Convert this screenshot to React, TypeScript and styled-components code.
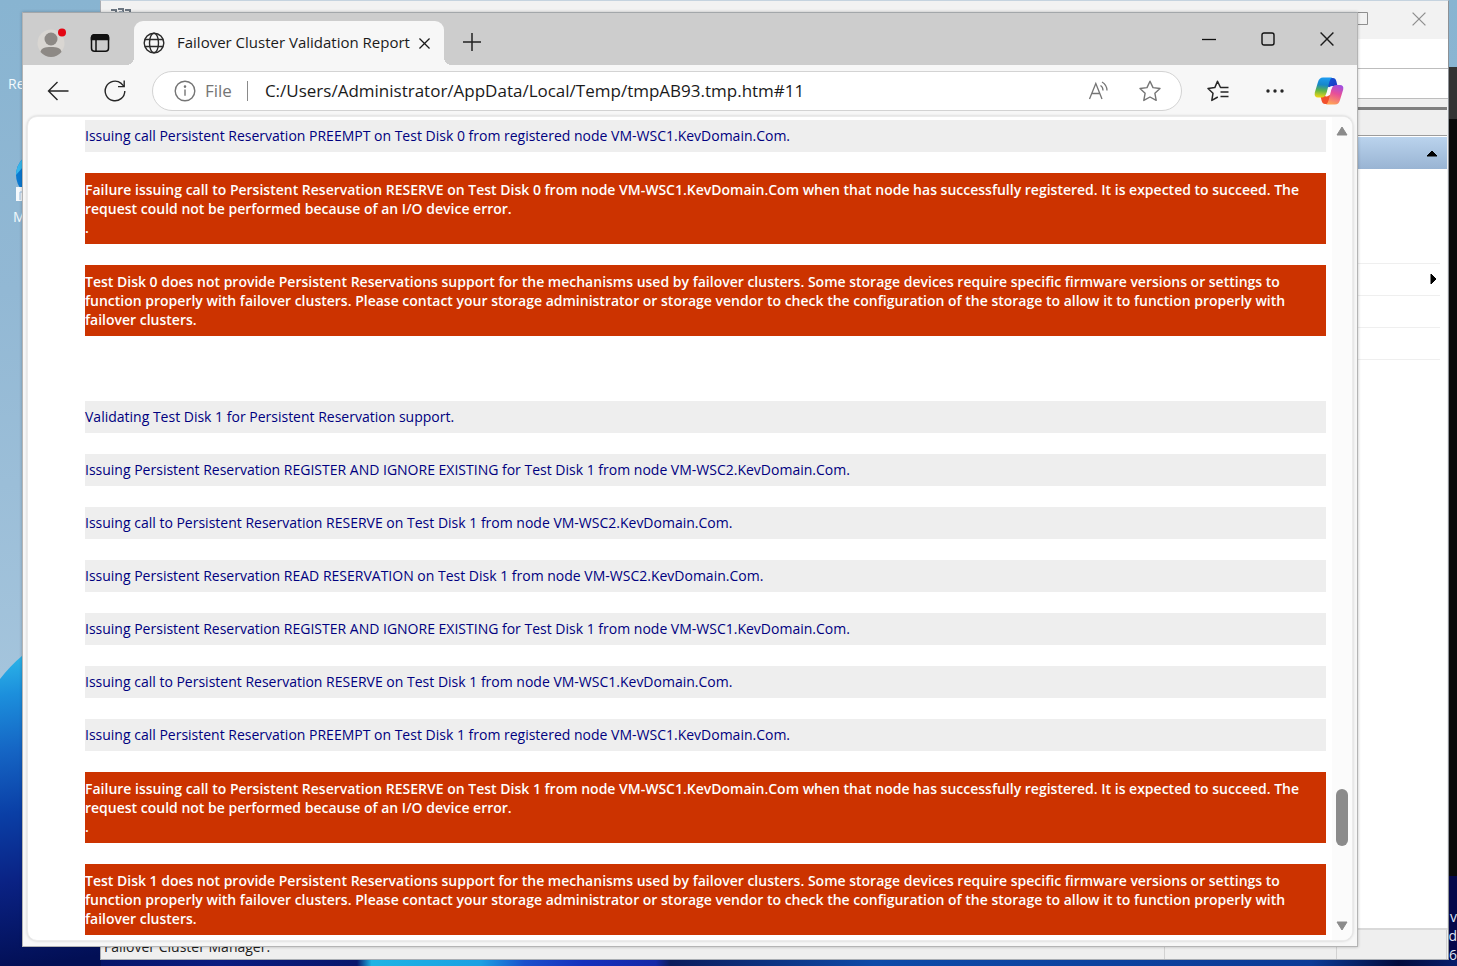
import React from "react";
import styled, { createGlobalStyle } from "styled-components";

const Global = createGlobalStyle`
  * { box-sizing: border-box; }
  html, body, #root { height: 100%; }
  body { margin: 0; font-family: "Open Sans", "Noto Sans", sans-serif; }
  button { border: 0; padding: 0; background: none; font: inherit; color: inherit; display: flex; align-items: center; justify-content: center; }
  svg { display: block; flex: none; }
`;

/* ---------- Desktop ---------- */

const Desktop = styled.main`
  position: relative;
  min-height: 100vh;
  overflow: hidden;
  background: #8ab4d0;
`;

const WallpaperSvg = styled.svg`
  position: absolute;
  inset: 0;
  width: 100%;
  height: 100%;
`;

const Shortcut = styled.div<{ $top: number; $left: number }>`
  position: absolute;
  top: ${(p) => p.$top}px;
  left: ${(p) => p.$left}px;
  color: #f4fafd;
  font-size: 14px;
  line-height: 20px;
`;

const ConsoleEdge = styled.div`
  position: absolute;
  top: 67px;
  right: 0;
  bottom: 90px;
  width: 10px;
  background: linear-gradient(#333 52px, #0a0a0a 52px);
`;

const Watermark = styled.div`
  position: absolute;
  right: 0;
  bottom: 2px;
  color: #dfe6f5;
  font-size: 14px;
  line-height: 19px;
  text-align: right;
`;

/* ---------- Cluster manager window ---------- */

const ManagerWindow = styled.section`
  position: absolute;
  inset: 0 8px 6px 100px;
  display: flex;
  flex-direction: column;
  background: #fff;
  border: 1px solid #a9adb3;
  border-top-color: #c5d3df;
  border-right: 1px solid #8d9196;
`;

const ManagerTitle = styled.header`
  display: flex;
  flex: none;
  justify-content: space-between;
  height: 38px;
  padding: 6px 22px 0 10px;
  background: #f2f2f2;
`;

const ManagerControls = styled.div`
  display: flex;
  gap: 44px;
  height: 24px;
  color: #8f8f8f;
`;

const ManagerBar = styled.div`
  flex: none;
  height: 30px;
  border-bottom: 1px solid #bdbdbd;
`;

const ManagerBody = styled.div`
  flex: 1;
  padding: 8px 1px 0 0;
  background: #efefef;
`;

const ActionsPane = styled.aside`
  height: 100%;
  border-top: 3px solid #7f7f7f;
  background: #fff;
`;

const ActionsHead = styled.div`
  height: 26px;
  border-bottom: 1px solid #9c9c9c;
  background: #efefef;
`;

const ActionsGroup = styled.div`
  display: flex;
  align-items: center;
  justify-content: flex-end;
  height: 32px;
  margin: 1px 0 94px;
  padding-right: 9px;
  background: linear-gradient(#bad3ed, #99b4d3);
`;

const ActionItem = styled.div`
  display: flex;
  align-items: center;
  justify-content: flex-end;
  height: 32px;
  margin-right: 7px;
  padding: 0 3px 2px 0;
  border-top: 1px solid #efefef;
`;

const StatusBar = styled.footer`
  display: flex;
  flex: none;
  justify-content: flex-end;
  height: 31px;
  border-top: 2px solid #d9d9d9;
  background: #efefef;
`;

const StatusText = styled.span`
  flex: 1;
  padding: 7px 0 0 3px;
  font-size: 14px;
  line-height: 20px;
  color: #1c1c1c;
`;

const StatusCell = styled.span<{ $width: number }>`
  width: ${(p) => p.$width}px;
  border-left: 1px solid #d2d2d2;
`;

/* ---------- Browser window ---------- */

const BrowserWindow = styled.section`
  position: absolute;
  inset: 12px 99px 19px 22px;
  display: flex;
  flex-direction: column;
  background: #f7f7f7;
  border: 1px solid #b4b4b4;
  border-top-color: #a3a7aa;
  box-shadow: 0 0 3px rgba(0, 0, 0, 0.25);
`;

const TitleBar = styled.header`
  display: flex;
  flex: none;
  align-items: flex-end;
  height: 52px;
  background: #cdcdcd;
  color: #1b1b1b;
`;

const ProfileButton = styled.button`
  width: 30px;
  height: 30px;
  margin: 0 0 7px 13px;
`;

const WorkspaceButton = styled.button`
  width: 20px;
  height: 20px;
  margin: 0 24px 12px 24px;
`;

const Tab = styled.div`
  position: relative;
  display: flex;
  align-items: center;
  width: 310px;
  height: 44px;
  padding: 0 14px 0 9px;
  border-radius: 9px 9px 0 0;
  background: #f7f7f7;

  &::before,
  &::after {
    content: "";
    position: absolute;
    bottom: 0;
    width: 8px;
    height: 8px;
  }
  &::before {
    left: -8px;
    background: radial-gradient(circle at 0 0, #cdcdcd 8px, #f7f7f7 8px);
  }
  &::after {
    right: -8px;
    background: radial-gradient(circle at 100% 0, #cdcdcd 8px, #f7f7f7 8px);
  }
`;

const TabTitle = styled.span`
  flex: 1;
  min-width: 0;
  padding: 0 0 2px 12px;
  font-size: 15px;
  line-height: 20px;
  white-space: nowrap;
`;

const NewTab = styled.button`
  width: 20px;
  height: 20px;
  margin: 0 auto 13px 18px;
`;

const WindowControls = styled.div`
  display: flex;
  align-items: center;
  gap: 43px;
  height: 52px;
  padding-right: 22px;

  button { width: 16px; height: 52px; }
`;

const Toolbar = styled.div`
  display: flex;
  flex: none;
  align-items: center;
  height: 51px;
  padding: 0 16px 0 23px;
  color: #262626;
`;

const IconButton = styled.button<{ $gap?: number }>`
  flex: none;
  width: 24px;
  height: 32px;
  margin-left: ${(p) => p.$gap ?? 0}px;
`;

const AddressBar = styled.div`
  display: flex;
  flex: 1;
  align-items: center;
  min-width: 0;
  height: 40px;
  margin-left: 25px;
  padding: 0 19px 0 21px;
  border: 1px solid #d3d3d3;
  border-radius: 20px;
  background: #fff;
  color: #757575;
`;

const SchemeLabel = styled.label`
  padding: 0 15px 0 9px;
  border-right: 1px solid #8a8a8a;
  font-size: 17px;
  line-height: 20px;
`;

const AddressInput = styled.input`
  flex: 1;
  min-width: 0;
  padding: 0 0 0 17px;
  border: 0;
  outline: 0;
  background: none;
  color: #1a1a1a;
  font: 17px/24px "Open Sans", "Noto Sans", sans-serif;
`;

const Viewport = styled.div`
  display: flex;
  flex: 1;
  min-height: 0;
  margin: 0 4px 5px;
  overflow: hidden;
  border: 1px solid #ebebeb;
  border-radius: 10px;
  background: #fff;
  box-shadow: 0 0 3px rgba(0, 0, 0, 0.18);
`;

const Report = styled.article`
  flex: 1;
  min-width: 0;
  padding: 3px 6px 0 57px;
  overflow: hidden;
`;

const ReportSection = styled.section`
  display: flex;
  flex-direction: column;
  gap: 21px;
  margin-bottom: 65px;
`;

const InfoRow = styled.p`
  flex: none;
  margin: 0;
  padding: 7px 0;
  background: #eee;
  color: #00007f;
  font-size: 14px;
  line-height: 18px;
`;

const ErrorRow = styled.p`
  flex: none;
  margin: 0;
  padding: 7px 0;
  background: #cc3300;
  color: #fff;
  font-size: 14px;
  font-weight: 600;
  line-height: 19px;
  white-space: pre-line;
`;

const ScrollTrack = styled.div`
  position: relative;
  display: flex;
  flex: none;
  flex-direction: column;
  align-items: center;
  justify-content: space-between;
  width: 20px;
  padding: 9px 0;
  background: #fbfbfb;
`;

const ScrollThumb = styled.span`
  position: absolute;
  bottom: 94px;
  left: 4px;
  width: 12px;
  height: 57px;
  border-radius: 6px;
  background: #8b8b8b;
`;

/* ---------- Drawings ---------- */

const Wallpaper = () => (
  <WallpaperSvg viewBox="0 0 1457 966" preserveAspectRatio="none" aria-hidden="true">
    <defs>
      <linearGradient id="sky" x1="0" y1="0" x2="0" y2="1">
        <stop offset="0" stopColor="#88b4d1" />
        <stop offset="0.3" stopColor="#92b8d4" />
        <stop offset="0.7" stopColor="#a4c4dc" />
      </linearGradient>
      <linearGradient id="bloom" gradientUnits="userSpaceOnUse" x1="22" y1="655" x2="70" y2="960">
        <stop offset="0" stopColor="#2cb4e8" />
        <stop offset="0.12" stopColor="#1c8fdc" />
        <stop offset="0.3" stopColor="#1565c4" />
        <stop offset="0.5" stopColor="#0a3fa6" />
        <stop offset="0.72" stopColor="#0a2284" />
        <stop offset="1" stopColor="#020f55" />
      </linearGradient>
      <linearGradient id="base" gradientUnits="userSpaceOnUse" x1="0" y1="0" x2="1457" y2="0">
        <stop offset="0" stopColor="#020f55" />
        <stop offset="0.15" stopColor="#0a1b80" />
        <stop offset="0.245" stopColor="#08166c" />
        <stop offset="0.255" stopColor="#1db4e4" />
        <stop offset="0.33" stopColor="#1ba0e2" />
        <stop offset="0.36" stopColor="#1a50cc" />
        <stop offset="0.4" stopColor="#1530bd" />
        <stop offset="0.45" stopColor="#1428a8" />
        <stop offset="0.46" stopColor="#0b1c5c" />
        <stop offset="0.6" stopColor="#0d4aa8" />
        <stop offset="0.9" stopColor="#0b3a96" />
        <stop offset="0.96" stopColor="#020a3c" />
        <stop offset="1" stopColor="#071d6c" />
      </linearGradient>
    </defs>
    <rect width="1457" height="966" fill="url(#sky)" />
    <path d="M0 679Q10 666 23 655L110 620V966H0Z" fill="url(#bloom)" />
    <path d="M101 946H1457V966H101Z" fill="url(#base)" />
    <path d="M1440 860H1457V960H1440Z" fill="#04084a" />
  </WallpaperSvg>
);

const EdgeShortcutIcon = () => (
  <svg width="48" height="48" viewBox="0 0 48 48" aria-hidden="true">
    <circle cx="24" cy="22" r="23" fill="#0b79d0" />
    <path d="M1 22A23 23 0 0 1 24-1L8 14Z" fill="#35b6ec" />
    <rect x="1" y="34" width="16" height="16" fill="#f5f9fc" />
    <path d="M5 47V39H10" fill="none" stroke="#9dbfe0" />
  </svg>
);

const ServersIcon = () => (
  <svg width="20" height="8" viewBox="0 0 20 8" fill="none" stroke="#6c7681" strokeWidth="2" aria-hidden="true">
    <path d="M0 3H5V8M7 2H12V8M14 3H19V8" />
    <path d="M0 6H4M8 5H12M14 6H18" stroke="#9aa7b4" />
  </svg>
);

const Avatar = () => (
  <svg width="30" height="30" viewBox="0 0 30 30" aria-hidden="true">
    <circle cx="15" cy="15" r="13.5" fill="#d9d6d2" />
    <circle cx="15" cy="11" r="6.500" fill="#8d8985" />
    <path d="M4.500 24C5 20 9 19 15 19S25 20 25.500 24Q21 29 15 29T4.500 24Z" fill="#8d8985" />
    <circle cx="26" cy="4.500" r="4" fill="#e30613" />
  </svg>
);

const WorkspaceIcon = () => (
  <svg width="20" height="20" viewBox="0 0 20 20" fill="none" stroke="#111" strokeWidth="1.500" aria-hidden="true">
    <rect x="1.500" y="1.800" width="17" height="16.500" rx="3" />
    <path d="M1.500 6.500V4.500Q1.500 1.800 4.500 1.800H15.500Q18.500 1.800 18.500 4.500V6.500Z" fill="#111" />
    <path d="M6 7V18" />
  </svg>
);

const GlobeIcon = () => (
  <svg width="22" height="22" viewBox="0 0 22 22" fill="none" stroke="#2a2a2a" strokeWidth="1.400" aria-hidden="true">
    <circle cx="11" cy="11" r="9.800" />
    <ellipse cx="11" cy="11" rx="4.500" ry="9.800" />
    <path d="M2 7.500H20M2 14.500H20" />
  </svg>
);

const Cross = ({ size = 12, width = 1.4 }: { size?: number; width?: number }) => (
  <svg width={size} height={size} viewBox="0 0 12 12" fill="none" stroke="currentColor" strokeWidth={width} aria-hidden="true">
    <path d="M.5.5L11.500 11.500M11.500.5L.5 11.500" />
  </svg>
);

const PlusIcon = () => (
  <svg width="20" height="20" viewBox="0 0 20 20" fill="none" stroke="#222" strokeWidth="1.500" aria-hidden="true">
    <path d="M10 1V19M1 10H19" />
  </svg>
);

const MinimizeIcon = () => (
  <svg width="14" height="14" viewBox="0 0 14 14" stroke="#111" strokeWidth="1.300" aria-hidden="true">
    <path d="M0 7.500H14" />
  </svg>
);

const MaximizeIcon = () => (
  <svg width="14" height="14" viewBox="0 0 14 14" fill="none" stroke="#111" strokeWidth="1.400" aria-hidden="true">
    <rect x="1" y="1" width="12" height="12" rx="2" />
  </svg>
);

const BackIcon = () => (
  <svg width="22" height="20" viewBox="0 0 22 20" fill="none" stroke="currentColor" strokeWidth="1.400" aria-hidden="true">
    <path d="M21.500 10H1.500M10.500 1L1.500 10L10.500 19" />
  </svg>
);

const ReloadIcon = () => (
  <svg width="24" height="24" viewBox="0 0 24 24" fill="none" stroke="currentColor" strokeWidth="1.400" aria-hidden="true">
    <path d="M21.800 12A9.800 9.800 0 1 1 18.200 4.400L21 7.200" />
    <path d="M21.200 1.500V7.600H15" />
  </svg>
);

const InfoIcon = () => (
  <svg width="22" height="22" viewBox="0 0 22 22" fill="none" stroke="currentColor" strokeWidth="1.400" aria-hidden="true">
    <circle cx="11" cy="11" r="9.800" />
    <path d="M11 9.500V15.800" />
    <circle cx="11" cy="6.600" r=".6" fill="currentColor" />
  </svg>
);

const ReadAloudIcon = () => (
  <svg width="22" height="20" viewBox="0 0 22 20" fill="none" stroke="currentColor" strokeWidth="1.300" aria-hidden="true">
    <path d="M1.500 18L7.800 2.500L14 18M3.800 12.500H11.800" />
    <path d="M12.500 4.500Q15 6 15 9.500M14 1Q19 4 19 9.500" />
  </svg>
);

const StarIcon = () => (
  <svg width="22" height="22" viewBox="0 0 22 22" fill="none" stroke="currentColor" strokeWidth="1.400" strokeLinejoin="round" aria-hidden="true">
    <path d="M11 1.200L14 7.600L21 8.500L15.900 13.300L17.200 20.400L11 17L4.800 20.400L6.100 13.300L1 8.500L8 7.600Z" />
  </svg>
);

const FavoritesIcon = () => (
  <svg width="22" height="22" viewBox="0 0 22 22" fill="none" stroke="currentColor" strokeWidth="1.500" strokeLinejoin="round" aria-hidden="true">
    <path d="M21.500 7.500H13.500L10.500 1.200L7.800 7.600L1 8.500L6 13.300L4.800 20.400L10.800 17" />
    <path d="M13.500 12H21.500M13.500 16.500H21.500" />
  </svg>
);

const DotsIcon = () => (
  <svg width="18" height="4" viewBox="0 0 18 4" fill="currentColor" aria-hidden="true">
    <circle cx="2" cy="2" r="1.700" />
    <circle cx="9" cy="2" r="1.700" />
    <circle cx="16" cy="2" r="1.700" />
  </svg>
);

const CopilotIcon = () => (
  <svg width="30" height="28" viewBox="0 0 30 28" aria-hidden="true">
    <defs>
      <linearGradient id="cpA" x1="0.4" y1="0" x2="0.3" y2="1">
        <stop offset="0" stopColor="#1d9bf0" />
        <stop offset="0.35" stopColor="#1787c9" />
        <stop offset="0.65" stopColor="#5fb548" />
        <stop offset="1" stopColor="#f5d713" />
      </linearGradient>
      <linearGradient id="cpB" x1="0.7" y1="0" x2="0.4" y2="1">
        <stop offset="0" stopColor="#a14fe0" />
        <stop offset="0.45" stopColor="#e84f98" />
        <stop offset="1" stopColor="#ffa257" />
      </linearGradient>
      <linearGradient id="cpC" x1="0" y1="0" x2="1" y2="1">
        <stop offset="0" stopColor="#1358d8" />
        <stop offset="1" stopColor="#1c34c0" />
      </linearGradient>
    </defs>
    <path d="M14 1H19Q21.500 1 22.300 4L23.500 9H20Q17 9 16 11L13 9Z" fill="url(#cpC)" />
    <path d="M16 27H11Q8.500 27 7.700 24L6.500 19H10Q13 19 14 17L18 20Z" fill="#f2502c" />
    <path d="M9 .5H18Q16.200 1.500 15.300 5L12.800 15Q11.500 20.500 7.500 20.500H4Q0 20.500 .8 15.500L4 5Q5.200.5 9 .5Z" fill="url(#cpA)" />
    <path d="M21 27.500H12Q13.800 26.500 14.700 23L17.200 13Q18.500 8 22.500 8H26Q30 8 29.200 12.500L26 23Q24.800 27.500 21 27.500Z" fill="url(#cpB)" />
    <path d="M14.800 10.500Q16 8.800 19 8.900Q17.600 10 17 12.500L15.300 18Q14.300 19.800 11.200 19.300Q12.800 17.500 13.300 15Z" fill="#fdf8fb" />
  </svg>
);

const Triangle = ({ d, w, h, fill }: { d: string; w: number; h: number; fill: string }) => (
  <svg width={w} height={h} viewBox={`0 0 ${w} ${h}`} aria-hidden="true">
    <path d={d} fill={fill} stroke={fill} strokeLinejoin="round" />
  </svg>
);

/* ---------- Report data ---------- */

type Entry = { kind: "info" | "error"; text: string };

const info = (text: string): Entry => ({ kind: "info", text });
const error = (text: string): Entry => ({ kind: "error", text });

const outcome = (disk: number): Entry[] => [
  info(`Issuing call Persistent Reservation PREEMPT on Test Disk ${disk} from registered node VM-WSC1.KevDomain.Com.`),
  error(
    `Failure issuing call to Persistent Reservation RESERVE on Test Disk ${disk} from node VM-WSC1.KevDomain.Com when that node has successfully registered. It is expected to succeed. The\nrequest could not be performed because of an I/O device error.\n.`
  ),
  error(
    `Test Disk ${disk} does not provide Persistent Reservations support for the mechanisms used by failover clusters. Some storage devices require specific firmware versions or settings to\nfunction properly with failover clusters. Please contact your storage administrator or storage vendor to check the configuration of the storage to allow it to function properly with\nfailover clusters.`
  ),
];

const sections: Entry[][] = [
  outcome(0),
  [
    info("Validating Test Disk 1 for Persistent Reservation support."),
    info("Issuing Persistent Reservation REGISTER AND IGNORE EXISTING for Test Disk 1 from node VM-WSC2.KevDomain.Com."),
    info("Issuing call to Persistent Reservation RESERVE on Test Disk 1 from node VM-WSC2.KevDomain.Com."),
    info("Issuing Persistent Reservation READ RESERVATION on Test Disk 1 from node VM-WSC2.KevDomain.Com."),
    info("Issuing Persistent Reservation REGISTER AND IGNORE EXISTING for Test Disk 1 from node VM-WSC1.KevDomain.Com."),
    info("Issuing call to Persistent Reservation RESERVE on Test Disk 1 from node VM-WSC1.KevDomain.Com."),
    ...outcome(1),
  ],
];

export default function App() {
  return (
    <Desktop>
      <Global />
      <Wallpaper />
      <Shortcut $top={74} $left={8}>Re</Shortcut>
      <Shortcut $top={153} $left={15}><EdgeShortcutIcon /></Shortcut>
      <Shortcut $top={207} $left={13}>M</Shortcut>
      <ConsoleEdge />
      <Watermark>
        <div>v</div>
        <div>d</div>
        <div>26</div>
      </Watermark>

      <ManagerWindow>
        <ManagerTitle>
          <ServersIcon />
          <ManagerControls>
            <button aria-label="Maximize manager">
              <svg width="14" height="14" viewBox="0 0 14 14" fill="none" stroke="currentColor"><path d="M.5 .5H13.500V12.500H.5Z" /></svg>
            </button>
            <button aria-label="Close manager"><Cross size={14} width={1.1} /></button>
          </ManagerControls>
        </ManagerTitle>
        <ManagerBar />
        <ManagerBar />
        <ManagerBody>
          <ActionsPane>
            <ActionsHead />
            <ActionsGroup><Triangle d="M1 6L6 1L11 6Z" w={12} h={7} fill="#000" /></ActionsGroup>
            <ActionItem><Triangle d="M1 1L6 6L1 11Z" w={7} h={12} fill="#000" /></ActionItem>
            <ActionItem />
            <ActionItem />
            <ActionItem />
          </ActionsPane>
        </ManagerBody>
        <StatusBar>
          <StatusText>Failover Cluster Manager.</StatusText>
          <StatusCell $width={172} />
          <StatusCell $width={110} />
          <StatusCell $width={2} />
        </StatusBar>
      </ManagerWindow>

      <BrowserWindow>
        <TitleBar>
          <ProfileButton aria-label="Profile"><Avatar /></ProfileButton>
          <WorkspaceButton aria-label="Tab actions"><WorkspaceIcon /></WorkspaceButton>
          <Tab>
            <GlobeIcon />
            <TabTitle>Failover Cluster Validation Report</TabTitle>
            <button aria-label="Close tab"><Cross size={11} /></button>
          </Tab>
          <NewTab aria-label="New tab"><PlusIcon /></NewTab>
          <WindowControls>
            <button aria-label="Minimize"><MinimizeIcon /></button>
            <button aria-label="Maximize"><MaximizeIcon /></button>
            <button aria-label="Close"><Cross size={14} width={1.2} /></button>
          </WindowControls>
        </TitleBar>
        <Toolbar>
          <IconButton aria-label="Back"><BackIcon /></IconButton>
          <IconButton aria-label="Reload" $gap={33}><ReloadIcon /></IconButton>
          <AddressBar>
            <InfoIcon />
            <SchemeLabel htmlFor="address">File</SchemeLabel>
            <AddressInput id="address" defaultValue="C:/Users/Administrator/AppData/Local/Temp/tmpAB93.tmp.htm#11" />
            <IconButton aria-label="Read aloud"><ReadAloudIcon /></IconButton>
            <IconButton aria-label="Add to favorites" $gap={27}><StarIcon /></IconButton>
          </AddressBar>
          <IconButton aria-label="Favorites" $gap={24}><FavoritesIcon /></IconButton>
          <IconButton aria-label="Settings and more" $gap={33}><DotsIcon /></IconButton>
          <IconButton aria-label="Copilot" $gap={30}><CopilotIcon /></IconButton>
        </Toolbar>
        <Viewport>
          <Report>
            {sections.map((entries, i) => (
              <ReportSection key={i}>
                {entries.map(({ kind, text }) =>
                  kind === "info" ? <InfoRow key={text}>{text}</InfoRow> : <ErrorRow key={text}>{text}</ErrorRow>
                )}
              </ReportSection>
            ))}
          </Report>
          <ScrollTrack>
            <Triangle d="M1 9L6 1L11 9Z" w={12} h={10} fill="#8b8b8b" />
            <ScrollThumb />
            <Triangle d="M1 1L6 9L11 1Z" w={12} h={10} fill="#8b8b8b" />
          </ScrollTrack>
        </Viewport>
      </BrowserWindow>
    </Desktop>
  );
}
